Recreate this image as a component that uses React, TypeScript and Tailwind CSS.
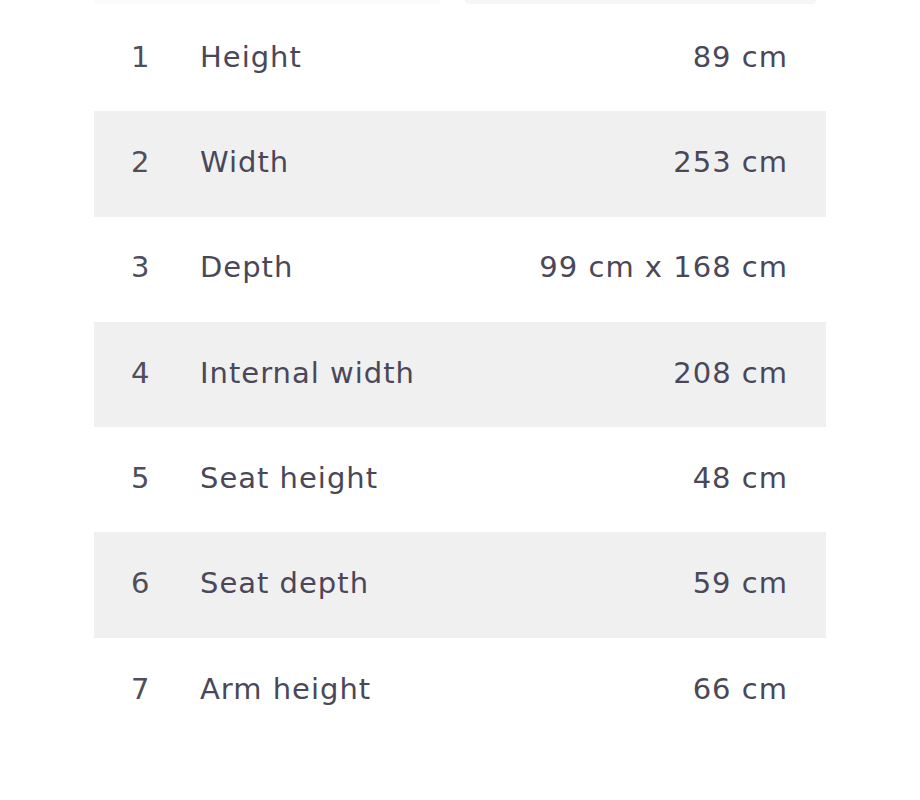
const rows = [
  { n: 1, label: "Height", value: "89 cm" },
  { n: 2, label: "Width", value: "253 cm" },
  { n: 3, label: "Depth", value: "99 cm x 168 cm" },
  { n: 4, label: "Internal width", value: "208 cm" },
  { n: 5, label: "Seat height", value: "48 cm" },
  { n: 6, label: "Seat depth", value: "59 cm" },
  { n: 7, label: "Arm height", value: "66 cm" },
];

export default function App() {
  return (
    <div className="w-[920px] h-[800px] bg-white font-['DejaVu_Sans',sans-serif]">
      <div className="flex h-[6px] pl-[94px]">
        <div className="w-[346px] h-[4px] bg-[#fbfbfb]" />
        <div className="ml-[25px] w-[351px] h-[4px] bg-[#f6f6f6] rounded-b" />
      </div>
      <div className="ml-[94px] w-[732px]">
        {rows.map((r, i) => (
          <div
            key={r.n}
            className={`flex items-center h-[105.3px] pb-[2px] text-[29px] tracking-[1px] text-[#4a4858] ${i % 2 === 1 ? "bg-[#f0f0f1]" : "bg-white"}`}
          >
            <span className="w-[106px] pl-[37px] text-[#4f4e5a]">{r.n}</span>
            <span className="flex-1">{r.label}</span>
            <span className="pr-[38px]">{r.value}</span>
          </div>
        ))}
      </div>
    </div>
  );
}
